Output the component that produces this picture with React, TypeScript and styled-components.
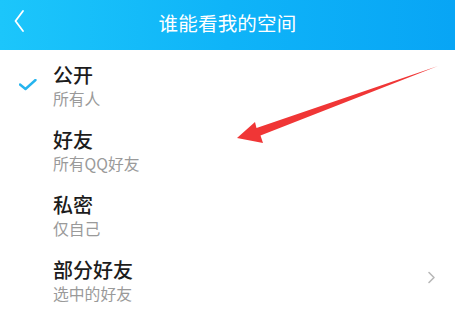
import styled, { createGlobalStyle } from 'styled-components';

const GlobalStyle = createGlobalStyle`
  html, body {
    margin: 0;
    padding: 0;
    background: #ffffff;
  }
  body {
    font-family: "Noto Sans CJK SC", "Noto Sans", sans-serif;
  }
`;

const Page = styled.div`
  position: relative;
  width: 455px;
  height: 309px;
  overflow: hidden;
  background: #ffffff;
`;

const Header = styled.header`
  position: relative;
  height: 50px;
  display: flex;
  align-items: center;
  justify-content: center;
  background: linear-gradient(90deg, #1cc6fb 0%, #0fb4f8 50%, #08a5f5 100%);
`;

const BackButton = styled.button`
  position: absolute;
  left: 8px;
  top: 9px;
  width: 22px;
  height: 24px;
  padding: 0;
  border: none;
  background: none;
  display: flex;
  align-items: center;
  justify-content: center;
`;

const Title = styled.h1`
  margin: 0 0 5px;
  font-size: 19.5px;
  font-weight: 400;
  color: #ffffff;
  letter-spacing: 0.2px;
`;

const List = styled.ul`
  list-style: none;
  margin: 0;
  padding: 0;
`;

const Row = styled.li`
  height: 65px;
  display: flex;
  align-items: center;
  padding-right: 19px;
`;

const CheckCell = styled.div`
  width: 53px;
  display: flex;
  justify-content: flex-start;
  padding-left: 19px;
  box-sizing: border-box;
  align-self: flex-start;
  margin-top: 29px;
`;

const Texts = styled.div`
  flex: 1;
  display: flex;
  flex-direction: column;
  align-self: flex-start;
  padding-top: 12px;
`;

const ItemTitle = styled.div`
  font-size: 20px;
  font-weight: 500;
  line-height: 25px;
  color: #1c1c1c;
`;

const ItemSub = styled.div`
  margin-top: 1px;
  font-size: 15.8px;
  line-height: 21px;
  color: #9a9a9a;
`;

const Arrow = styled.svg`
  position: absolute;
  left: 0;
  top: 0;
  pointer-events: none;
`;

interface Option {
  title: string;
  sub: string;
  checked?: boolean;
  more?: boolean;
}

const options: Option[] = [
  { title: '公开', sub: '所有人', checked: true },
  { title: '好友', sub: '所有QQ好友' },
  { title: '私密', sub: '仅自己' },
  { title: '部分好友', sub: '选中的好友', more: true },
];

export default function App() {
  return (
    <Page>
      <GlobalStyle />
      <Header>
        <BackButton>
          <svg width="14" height="24" viewBox="0 0 14 24">
            <path d="M11 2 L3.5 12 L11 22" fill="none" stroke="#fff" strokeWidth="1.8" strokeLinecap="round" strokeLinejoin="round" />
          </svg>
        </BackButton>
        <Title>谁能看我的空间</Title>
      </Header>
      <List>
        {options.map((o) => (
          <Row key={o.title}>
            <CheckCell>
              {o.checked && (
                <svg width="18" height="12" viewBox="0 0 18 12">
                  <path d="M1 5.5 L6.5 10 L16.5 1" fill="none" stroke="#26b4ee" strokeWidth="2.4" strokeLinecap="round" strokeLinejoin="round" />
                </svg>
              )}
            </CheckCell>
            <Texts>
              <ItemTitle>{o.title}</ItemTitle>
              <ItemSub>{o.sub}</ItemSub>
            </Texts>
            {o.more && (
              <svg width="9" height="13" viewBox="0 0 9 13">
                <path d="M2 1.5 L7 6.5 L2 11.5" fill="none" stroke="#b8b8b8" strokeWidth="1.6" strokeLinecap="round" strokeLinejoin="round" />
              </svg>
            )}
          </Row>
        ))}
      </List>
      <Arrow width="455" height="309" viewBox="0 0 455 309">
        <polygon points="237,138 255,122 256.5,128 438,66 260.5,135.5 263,143" fill="#f03636" />
      </Arrow>
    </Page>
  );
}
